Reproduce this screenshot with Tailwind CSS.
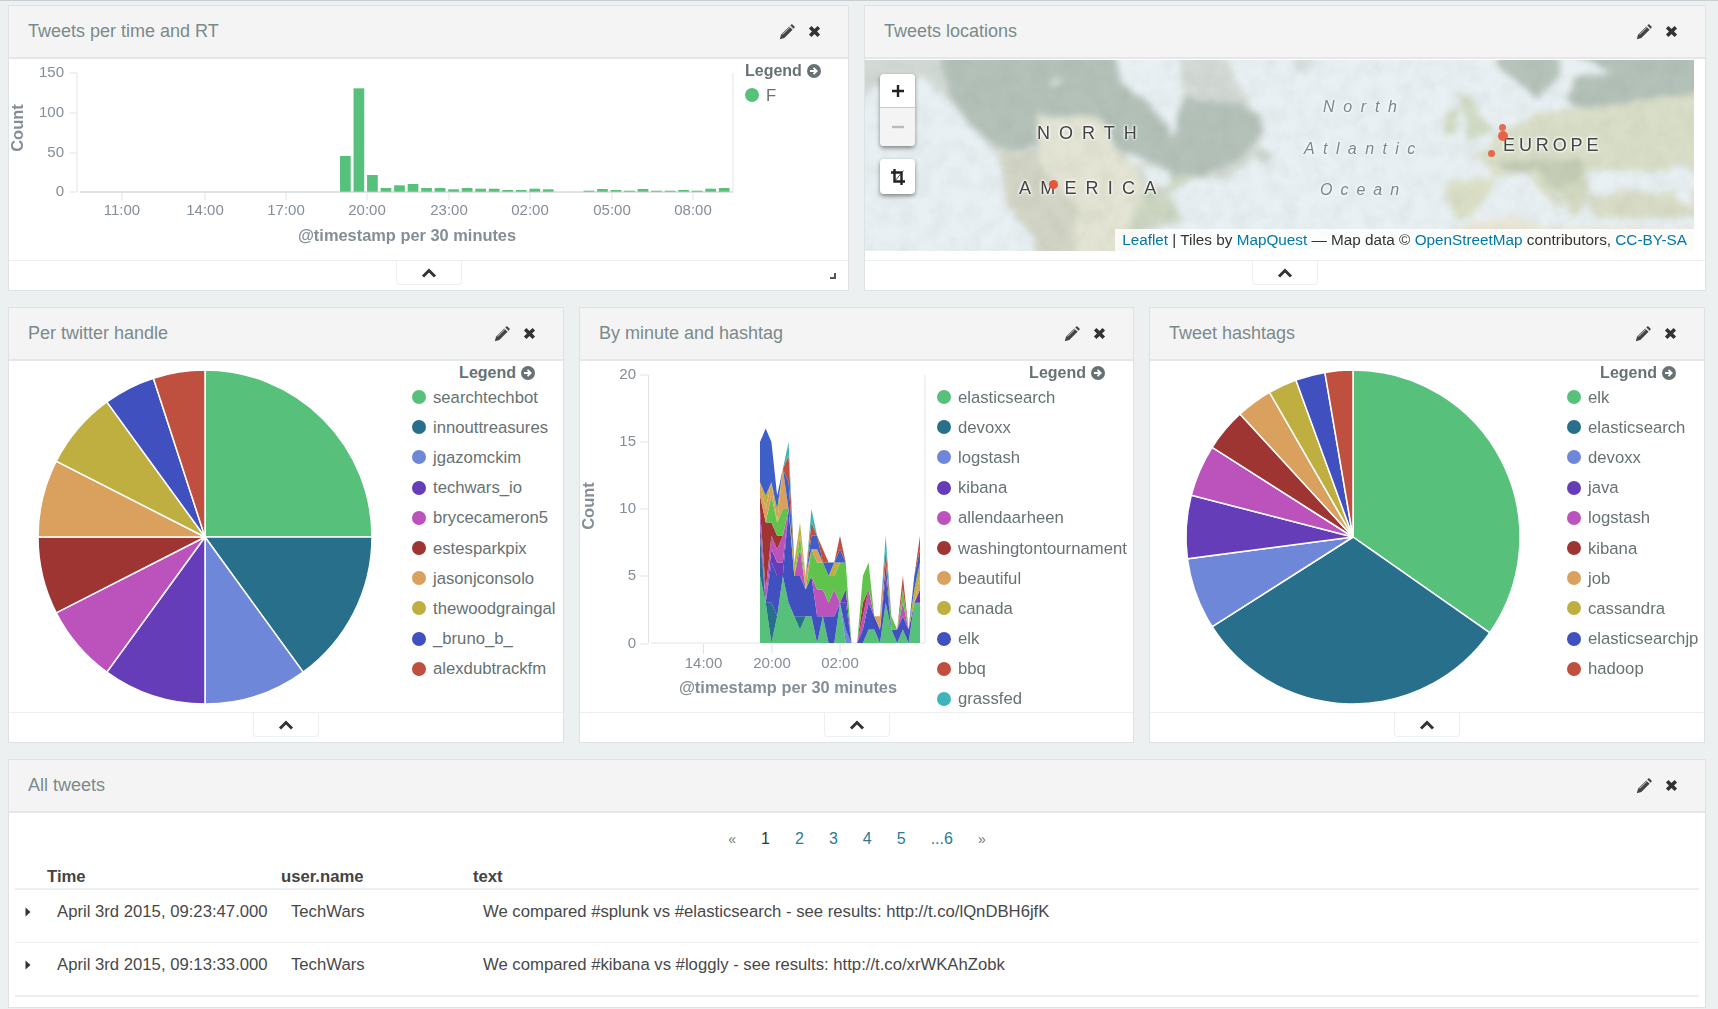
<!DOCTYPE html>
<html lang="en">
<head>
  <meta charset="UTF-8">
  <meta name="viewport" content="width=device-width, initial-scale=1.0">
  <title>Kibana dashboard</title>
  <script src="https://cdn.jsdelivr.net/npm/@tailwindcss/browser@4"></script>
</head>
<body class="bg-[#ecf0f1] font-['Liberation_Sans',Arial,sans-serif] text-[#6d797a] overflow-hidden">
  <div class="h-[1009px] w-[1718px] border-t border-[#c9cfd1] flex flex-col gap-4 pt-1 pb-px pl-2 pr-3 blur-[0.4px]">

    <!-- Row 1 -->
    <div class="flex gap-[15px] h-[286px] shrink-0">
      <section class="panel relative w-[841px] flex flex-col bg-white border border-[#dde2e3]">
        <header data-title="Tweets per time and RT"></header>
        <div class="flex-1 min-h-0 flex">
          <svg id="bars" width="734" height="201" viewBox="9 59 734 201" class="shrink-0"></svg>
          <div data-legend="one" class="flex-1 pl-[2px]"></div>
        </div>
        <footer></footer>
        <div class="absolute right-[12px] bottom-[11px] w-[6px] h-[6px] border-r-2 border-b-2 border-[#555]"></div>
      </section>

      <section class="panel w-[842px] flex flex-col bg-white border border-[#dde2e3]">
        <header data-title="Tweets locations"></header>
        <div class="flex-1 min-h-0">
          <!-- Map -->
          <div class="relative w-[829px] h-[191px] mt-px overflow-hidden bg-[#e9f0f3]">
            <svg width="829" height="191" viewBox="0 6 2487 573">
              <defs>
                <filter id="soft" x="-3%" y="-10%" width="106%" height="120%" color-interpolation-filters="sRGB">
                  <feTurbulence type="fractalNoise" baseFrequency="0.016" numOctaves="3" seed="4" result="noise"/>
                  <feDisplacementMap in="SourceGraphic" in2="noise" scale="30" xChannelSelector="R" yChannelSelector="G"/>
                  <feGaussianBlur stdDeviation="10"/>
                </filter>
                <filter id="grain" x="0" y="0" width="100%" height="100%" color-interpolation-filters="sRGB">
                  <feTurbulence type="fractalNoise" baseFrequency="0.02" numOctaves="4" seed="9"/>
                  <feColorMatrix type="matrix" values="0 0 0 0 0.35  0 0 0 0 0.4  0 0 0 0 0.36  1.6 0 0 0 -0.55"/>
                </filter>
              </defs>
              <g filter="url(#soft)">
                <!-- North America -->
                <path fill="#d3dad6" d="M-30,-20 L1080,-20 L1110,60 L1160,140 L1200,210 L1150,320 L1080,360 L980,360 L910,400 L960,490 L880,510 L770,620 L530,620 L490,520 L440,450 L420,400 L410,300 L340,230 L290,170 L240,110 L170,60 L60,70 L-30,130 Z"/>
                <path fill="#b4c1b9" d="M230,-20 L750,-20 L760,70 L840,130 L890,190 L920,235 L950,110 L1000,130 L1130,130 L1200,200 L1150,280 L1090,320 L1000,360 L920,350 L840,300 L750,270 L720,180 L510,170 L520,260 L430,280 L350,230 L290,170 L250,100 Z"/>
                <path fill="#e3e4d3" d="M510,175 L720,180 L750,280 L820,330 L840,400 L870,440 L800,480 L760,620 L600,620 L630,440 L540,340 L520,260 Z"/>
                <path fill="#d2d5c5" d="M410,290 L520,280 L550,350 L630,430 L630,620 L540,620 L490,520 L430,440 L410,370 Z"/>
                <path fill="#ccd6c2" d="M840,400 L920,350 L1000,360 L900,410 L960,490 L820,510 L770,620 L740,620 Z"/>
                <!-- Hudson Bay and the lakes -->
                <path fill="#e9f0f3" d="M750,-20 L940,-20 L955,110 L920,235 L890,170 L830,120 L760,60 Z"/>
                <path fill="#e9f0f3" d="M780,285 L850,305 L810,320 L790,310 Z"/>
                <path fill="#e9f0f3" d="M830,330 L900,330 L915,380 L850,385 Z"/>
                <path fill="#e9f0f3" d="M550,70 L600,60 L570,85 Z"/>
                <path fill="#cbd4cd" d="M1170,260 L1230,290 L1200,320 L1170,300 Z"/>
                <path fill="#d9e0df" d="M1265,-20 L1355,-20 L1325,50 L1285,35 Z"/>
                <!-- Europe -->
                <path fill="#d9dec8" d="M1795,310 L1865,270 L1925,210 L2005,170 L2115,150 L2295,130 L2520,90 L2520,340 L2395,340 L2335,340 L2205,340 L2175,340 L2155,350 L2145,420 L2075,400 L2015,340 L1965,340 L1885,350 L1845,300 Z"/>
                <path fill="#b6c3ba" d="M1895,-20 L2085,-20 L2075,60 L2025,130 L1985,100 L1945,60 L1905,30 Z"/>
                <path fill="#b4c1b9" d="M2105,-20 L2520,-20 L2520,100 L2295,130 L2165,150 L2105,130 L2125,60 L2195,50 L2245,40 Z"/>
                <path fill="#d0dac4" d="M1775,100 L1825,120 L1845,170 L1885,220 L1805,250 L1805,200 L1785,170 Z"/>
                <path fill="#d0dac4" d="M1735,170 L1775,155 L1780,210 L1740,230 Z"/>
                <path fill="#dadfc6" d="M1745,370 L1885,360 L1865,420 L1815,480 L1755,470 Z"/>
                <path fill="#c4ccb5" d="M1895,310 L2145,300 L2165,340 L2125,440 L2075,400 L2015,340 L1945,340 Z"/>
                <path fill="#d6dbc2" d="M1995,340 L2035,360 L2105,450 L2055,430 L2005,380 Z"/>
                <path fill="#d2d8bf" d="M2075,400 L2165,350 L2175,410 L2135,480 L2115,450 Z"/>
                <path fill="#d8dcc6" d="M2165,420 L2275,400 L2520,400 L2520,480 L2195,480 Z"/>
                <path fill="#e9f0f3" d="M2415,320 L2475,320 L2480,450 L2430,420 Z"/>
                <path fill="#e9e6d6" d="M1765,510 L1945,470 L2045,510 L2520,510 L2520,620 L1765,620 Z"/>
              </g>
              <rect x="0" y="6" width="2487" height="573" filter="url(#grain)" opacity="0.07"/>
            </svg>

            <span class="absolute left-[172px] top-[63px] text-[18px] leading-5 tracking-[9px] text-[#444] [text-shadow:0_0_3px_white,0_0_3px_white,0_0_3px_white]">NORTH</span>
            <span class="absolute left-[154px] top-[118px] text-[18px] leading-5 tracking-[9.200px] text-[#444] [text-shadow:0_0_3px_white,0_0_3px_white,0_0_3px_white]">AMERICA</span>
            <span class="absolute left-[458px] top-[37px] text-[16px] leading-5 italic tracking-[8.700px] text-[#7d878c] [text-shadow:0_0_3px_white,0_0_3px_white]">North</span>
            <span class="absolute left-[439px] top-[79px] text-[16px] leading-5 italic tracking-[8.400px] text-[#7d878c] [text-shadow:0_0_3px_white,0_0_3px_white]">Atlantic</span>
            <span class="absolute left-[455px] top-[120px] text-[16px] leading-5 italic tracking-[8px] text-[#7d878c] [text-shadow:0_0_3px_white,0_0_3px_white]">Ocean</span>
            <span class="absolute left-[638px] top-[75px] text-[18px] leading-5 tracking-[3.900px] text-[#444] [text-shadow:0_0_3px_white,0_0_3px_white,0_0_3px_white]">EUROPE</span>

            <span class="absolute left-[184px] top-[120px] w-[9px] h-[9px] rounded-full bg-[#e8553a]"></span>
            <span class="absolute left-[634px] top-[64px] w-[7px] h-[7px] rounded-full bg-[#e8553a]/85"></span>
            <span class="absolute left-[633px] top-[71px] w-[10px] h-[10px] rounded-full bg-[#e8553a]/90"></span>
            <span class="absolute left-[623px] top-[90px] w-[7px] h-[7px] rounded-full bg-[#e8553a]/85"></span>

            <div class="absolute left-[15px] top-[14px] w-[35px] h-[72px] rounded bg-white shadow-[0_2px_4px_rgba(0,0,0,0.45)] flex flex-col">
              <div class="h-[34px] border-b border-[#ccc] flex items-center justify-center text-[#222]">
                <svg width="14" height="14" viewBox="0 0 14 14"><path d="M7 1v12M1 7h12" stroke="#222" stroke-width="2.4"/></svg>
              </div>
              <div class="flex-1 rounded-b bg-[#f4f4f4] flex items-center justify-center">
                <svg width="14" height="14" viewBox="0 0 14 14"><path d="M1 7h12" stroke="#bbb" stroke-width="2.4"/></svg>
              </div>
            </div>
            <div class="absolute left-[15px] top-[99px] w-[35px] h-[35px] rounded bg-white shadow-[0_2px_4px_rgba(0,0,0,0.45)] flex items-center justify-center">
              <svg width="16" height="18" viewBox="0 0 16 18"><path d="M4.5 1v12.5H15M1 4.5h10.5V17" fill="none" stroke="#222" stroke-width="2.4"/><path d="M13.5 2.5L4 14" stroke="#222" stroke-width="0.8"/></svg>
            </div>

            <div class="absolute right-0 bottom-0 h-[22px] pl-[7px] pr-[7px] bg-white/85 text-[15.300px] leading-[22px] text-[#333] whitespace-nowrap">
              <span class="text-[#0078a8]">Leaflet</span> | Tiles by <span class="text-[#0078a8]">MapQuest</span> — Map data © <span class="text-[#0078a8]">OpenStreetMap</span> contributors, <span class="text-[#0078a8]">CC-BY-SA</span>
            </div>
          </div>
        </div>
        <footer></footer>
      </section>
    </div>

    <!-- Row 2 -->
    <div class="flex gap-[15px] h-[436px] shrink-0">
      <section class="panel w-[556px] flex flex-col bg-white border border-[#dde2e3]">
        <header data-title="Per twitter handle"></header>
        <div class="flex-1 min-h-0 flex">
          <svg id="pie1" width="401" height="352" viewBox="9 361 401 352" class="shrink-0"></svg>
          <div data-legend="handles" class="flex-1 pl-[2px]"></div>
        </div>
        <footer></footer>
      </section>

      <section class="panel w-[555px] flex flex-col bg-white border border-[#dde2e3]">
        <header data-title="By minute and hashtag"></header>
        <div class="flex-1 min-h-0 flex">
          <svg id="area" width="355" height="352" viewBox="580 361 355 352" class="shrink-0"></svg>
          <div data-legend="minute" class="flex-1 pl-[2px]"></div>
        </div>
        <footer></footer>
      </section>

      <section class="panel w-[556px] flex flex-col bg-white border border-[#dde2e3]">
        <header data-title="Tweet hashtags"></header>
        <div class="flex-1 min-h-0 flex">
          <svg id="pie2" width="416" height="352" viewBox="1150 361 416 352" class="shrink-0"></svg>
          <div data-legend="hashtags" class="flex-1 pl-[1px]"></div>
        </div>
        <footer></footer>
      </section>
    </div>

    <!-- All tweets -->
    <section class="panel flex-1 min-h-0 flex flex-col bg-white border border-[#dde2e3]">
      <header data-title="All tweets"></header>
      <div class="flex-1 min-h-0 px-[6px]">
        <div class="h-[52px] flex items-center justify-center gap-[25px] text-[16px] text-[#2c7a96]">
          <span class="text-[#6d797a] text-[14px]">«</span>
          <span class="text-[#333]">1</span>
          <span>2</span>
          <span>3</span>
          <span>4</span>
          <span>5</span>
          <span>...6</span>
          <span class="text-[#6d797a] text-[14px]">»</span>
        </div>
        <div class="h-[25px] flex pl-[32px] border-b-2 border-[#ecf0f1] text-[16.700px] font-bold leading-[24px] text-[#444]">
          <span class="w-[234px]">Time</span>
          <span class="w-[192px]">user.name</span>
          <span>text</span>
        </div>
        <div class="h-[53px] flex pt-[11px] border-b border-[#ecf0f1] text-[16.700px] leading-[22px] text-[#484848]">
          <svg width="42" height="22" viewBox="0 0 42 22" class="shrink-0"><path d="M10.5 6.5l5 4.500-5 4.500z" fill="#333"/></svg>
          <span class="w-[234px]">April 3rd 2015, 09:23:47.000</span>
          <span class="w-[192px]">TechWars</span>
          <span>We compared #splunk vs #elasticsearch - see results: http://t.co/lQnDBH6jfK</span>
        </div>
        <div class="h-[54px] flex pt-[11px] border-b-2 border-[#ecf0f1] text-[16.700px] leading-[22px] text-[#484848]">
          <svg width="42" height="22" viewBox="0 0 42 22" class="shrink-0"><path d="M10.5 6.500l5 4.500-5 4.500z" fill="#333"/></svg>
          <span class="w-[234px]">April 3rd 2015, 09:13:33.000</span>
          <span class="w-[192px]">TechWars</span>
          <span>We compared #kibana vs #loggly - see results: http://t.co/xrWKAhZobk</span>
        </div>
      </div>
    </section>
  </div>

  <script>
    const GREEN = "#57c17b", TEAL = "#286f8b", PERI = "#6f87d8", PURPLE = "#663db8", PINK = "#bc52bc",
      DRED = "#9e3533", ORANGE = "#daa05d", OLIVE = "#bfaf40", BLUE = "#4050bf", RED = "#bf503f",
      CYAN = "#3fb4bb", LIME = "#60c44c";
    const PALETTE = [GREEN, TEAL, PERI, PURPLE, PINK, DRED, ORANGE, OLIVE, BLUE, RED, CYAN];

    const LEGENDS = {
      one: ["F"],
      handles: ["searchtechbot", "innouttreasures", "jgazomckim", "techwars_io", "brycecameron5", "estesparkpix", "jasonjconsolo", "thewoodgraingal", "_bruno_b_", "alexdubtrackfm"],
      minute: ["elasticsearch", "devoxx", "logstash", "kibana", "allendaarheen", "washingtontournament", "beautiful", "canada", "elk", "bbq", "grassfed"],
      hashtags: ["elk", "elasticsearch", "devoxx", "java", "logstash", "kibana", "job", "cassandra", "elasticsearchjp", "hadoop"],
    };

    // Panel header and footer are the same everywhere
    document.querySelectorAll("header[data-title]").forEach((el) => {
      el.className = "h-[53px] shrink-0 flex items-center justify-between pl-[19px] pr-[27px] bg-[#f4f4f4] border-b-2 border-[#e3e7e8] text-[18px] text-[#7b8a8b]";
      el.innerHTML = `<span>${el.dataset.title}</span>
        <span class="flex items-center gap-[13px]">
          <svg width="16" height="16" viewBox="0 0 16 16"><path d="M.8 15.200l1.200-4.500 8.300-8.300 3.300 3.300-8.300 8.300z" fill="#444"/><path d="M11.300 1.400l.9-.9q.6-.5 1.200 0l2.100 2.100q.5.6 0 1.200l-.9.9z" fill="#444"/><path d="M3.600 10.600l7.400-7.400" stroke="#fff" stroke-width=".7"/></svg>
          <svg width="13" height="13" viewBox="0 0 13 13"><path d="M2.200 2.200l8.600 8.600M10.800 2.200l-8.600 8.600" stroke="#333" stroke-width="3.600"/></svg>
        </span>`;
    });
    document.querySelectorAll("footer").forEach((el) => {
      el.className = "h-[30px] shrink-0 flex justify-center border-t border-[#ecf0f1]";
      el.innerHTML = `<div class="w-[66px] h-[24px] flex items-center justify-center bg-white border-x border-b border-[#ecf0f1] rounded-b">
        <svg width="16" height="10" viewBox="0 0 16 10"><path d="M2 8.500l6-6 6 6" fill="none" stroke="#333" stroke-width="3"/></svg></div>`;
    });

    // Legends
    document.querySelectorAll("[data-legend]").forEach((el) => {
      const rows = LEGENDS[el.dataset.legend].map((name, i) =>
        `<div class="h-[30.200px] flex items-center gap-[7px] whitespace-nowrap text-[16.700px] text-[#667273]">
          <span class="w-[14px] h-[14px] rounded-full shrink-0" style="background:${PALETTE[i]}"></span>${name}</div>`).join("");
      el.innerHTML = `<div class="h-[21px] leading-[24px] flex justify-end items-start gap-[5px] pr-[28px] text-[16px] font-bold text-[#667273]">Legend
          <svg width="14" height="14" viewBox="0 0 14 14" class="mt-[5px]"><circle cx="7" cy="7" r="7" fill="#667273"/><path d="M3 7h6M6.500 3.800L9.700 7l-3.200 3.200" fill="none" stroke="#fff" stroke-width="1.800"/></svg>
        </div>${rows}`;
    });

    // Pie charts, angles in degrees clockwise from 12 o'clock
    function pie(id, cx, cy, r, angles) {
      let out = "", from = 0;
      const pt = (a) => `${cx + r * Math.sin(a * Math.PI / 180)} ${cy - r * Math.cos(a * Math.PI / 180)}`;
      angles.forEach((to, i) => {
        out += `<path d="M${cx} ${cy}L${pt(from)}A${r} ${r} 0 ${to - from > 180 ? 1 : 0} 1 ${pt(to)}Z" fill="${PALETTE[i]}" stroke="#fff" stroke-width="1.500"/>`;
        from = to;
      });
      document.getElementById(id).innerHTML = out;
    }
    pie("pie1", 205, 537, 167, [90, 144, 180, 216, 243, 270, 297, 324, 342, 360]);
    pie("pie2", 1353, 537, 167, [125, 237.5, 262.5, 284.5, 302.5, 317.4, 330, 340, 350.3, 360]);

    const txt = (x, y, s, extra = "") => `<text x="${x}" y="${y}" font-size="15" fill="#848e96" ${extra}>${s}</text>`;
    const line = (x1, y1, x2, y2, w = 1) => `<line x1="${x1}" y1="${y1}" x2="${x2}" y2="${y2}" stroke="#dfe3e5" stroke-width="${w}"/>`;
    const title = (x, y, s) => `<text x="${x}" y="${y}" font-size="16.400" font-weight="bold" fill="#848e96" text-anchor="middle">${s}</text>`;
    const count = (x, y) => `<text transform="translate(${x} ${y}) rotate(-90)" font-size="16.500" font-weight="bold" fill="#848e96" text-anchor="middle">Count</text>`;

    // Top bar chart: top y of each bar
    const BAR_TOPS = [156, 88.3, 175, 188, 185.3, 184, 188, 188, 189.300, 188, 188.700, 188.700, 190, 190, 188.700, 189.300, null, null, 190.700, 189, 190, 190.700, 189, 190.700, 190.700, 190, 190.700, 188.700, 188];
    let bars = line(77, 73, 77, 192) + line(80, 192, 733, 192, 2) + line(733, 73, 733, 192);
    [[150, 73], [100, 113], [50, 153], [0, 192]].forEach(([v, y]) => {
      bars += line(70, y, 77, y) + txt(64, y + 4, v, 'text-anchor="end"');
    });
    [["11:00", 122], ["14:00", 205], ["17:00", 286], ["20:00", 367], ["23:00", 449], ["02:00", 530], ["05:00", 612], ["08:00", 693]].forEach(([s, x]) => {
      bars += line(x, 193, x, 200) + txt(x, 215, s, 'text-anchor="middle"');
    });
    BAR_TOPS.forEach((top, i) => {
      if (top === null) return;
      const x = 340 + i * 13.530;
      bars += `<rect x="${x}" y="${top}" width="10.700" height="${191.700 - top}" fill="${GREEN}"/>`;
    });
    bars += title(407, 241, "@timestamp per 30 minutes") + count(23, 128);
    document.getElementById("bars").innerHTML = bars;

    // Stacked area chart, one row per half hour, layers bottom to top
    const LAYERS = [GREEN, TEAL, PERI, BLUE, PURPLE, PINK, DRED, LIME, ORANGE, OLIVE, "#3f5fc8", RED, CYAN];
    const STACK = [
      [5,3,0,0,1,1,1,0,1,0,3,0,0],
      [3,0,0,0,0,1,5,0,1,1,5,0,0],
      [0,3,0,3,1,1,1,2,1,0,3,0,0],
      [2,0,0,3,1,1,1,1,0,1,1,0,0],
      [5,0,0,0,1,2,0,2,3,0,0,0,0],
      [3,0,0,7,0,0,0,0,0,0,2,2,1],
      [2,0,0,3,0,0,0,0,0,1,0,0,0],
      [1,1,0,3,0,2,0,1,0,1,0,0,0],
      [2,0,0,2,0,0,0,0,1,0,0,0,0],
      [2,0,0,3,0,0,0,2,0,0,1,1,1],
      [0,0,0,2,0,2,0,2,1,0,1,0,0],
      [2,0,0,0,0,2,0,2,0,0,0,1,0],
      [0,0,0,2,0,1,0,2,0,0,1,0,0],
      [0,0,0,2,0,2,0,1,0,1,0,0,0],
      [3,0,0,0,0,0,0,3,0,0,1,1,0],
      [0,0,1,2,1,0,0,2,0,0,0,0,0],
      [0,0,0,0,0,0,0,0,0,0,0,0,0],
      [0,0,0,0,0,0,0,0,0,0,0,0,0],
      [0,0,0,1,0,1,1,2,0,0,0,0,0],
      [1,0,0,2,0,1,0,2,0,0,0,0,0],
      [1,0,0,1,0,0,0,0,0,0,0,0,0],
      [0,0,0,1,0,0,0,0,1,0,0,0,0],
      [3,0,0,2,1,0,0,0,0,0,0,1,1],
      [1,0,0,0,0,0,0,1,0,0,0,0,0],
      [0,0,0,1,0,0,0,0,0,0,0,0,0],
      [1,0,0,1,0,1,0,1,0,0,0,1,0],
      [0,0,0,1,0,0,0,0,0,0,0,0,0],
      [3,0,0,0,0,0,0,0,0,1,1,0,0],
      [3,0,0,0,1,0,0,0,1,1,1,1,0],
    ];
    const ax = (i) => 760 + i * (160 / 28), ay = (v) => 643 - v * 13.400;
    let area = line(648.500, 375, 648.500, 643) + line(651, 643, 925, 643, 1) + line(925, 375, 925, 643);
    [[20, 375], [15, 442], [10, 509], [5, 576], [0, 644]].forEach(([v, y]) => {
      area += line(640, y, 648, y) + txt(636, y + 4, v, 'text-anchor="end"');
    });
    [["14:00", 703.500], ["20:00", 772], ["02:00", 840]].forEach(([s, x]) => {
      area += line(x, 644, x, 654) + txt(x, 668, s, 'text-anchor="middle"');
    });
    const base = STACK.map(() => 0);
    LAYERS.forEach((color, l) => {
      const lower = STACK.map((_, i) => `${ax(i)},${ay(base[i])}`);
      STACK.forEach((row, i) => { base[i] += row[l]; });
      const upper = STACK.map((_, i) => `${ax(i)},${ay(base[i])}`);
      area += `<polygon points="${lower.join(" ")} ${upper.reverse().join(" ")}" fill="${color}"/>`;
    });
    area += title(788, 693, "@timestamp per 30 minutes") + count(594, 506);
    document.getElementById("area").innerHTML = area;
  </script>
</body>
</html>
